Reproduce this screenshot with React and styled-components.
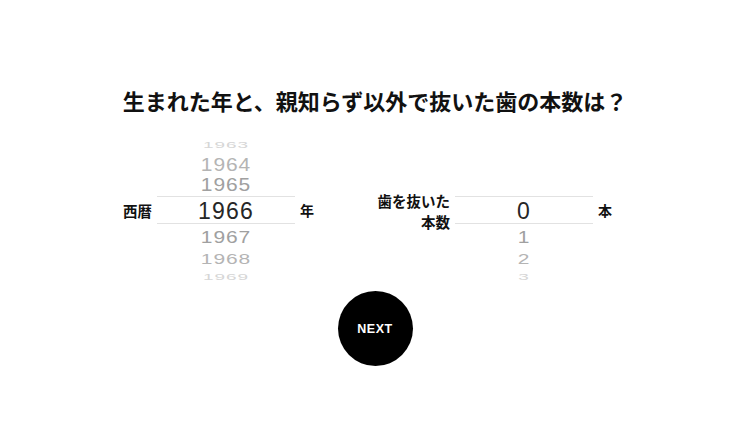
import React from "react";
import styled, { createGlobalStyle } from "styled-components";

const GlobalStyle = createGlobalStyle`
  html, body {
    margin: 0;
    padding: 0;
    background: #fff;
  }
  * {
    box-sizing: border-box;
  }
`;

const JP = `"Noto Sans CJK JP", "Noto Sans", sans-serif`;
const NUM = `"Liberation Sans", Arial, sans-serif`;

// 휠 모양 (위에서 아래로)
const WHEEL = [
  { h: 22, size: 19, sy: 0.45, tone: "#d6d6d6" },
  { h: 17, size: 21, sy: 0.87, tone: "#b4b4b4" },
  { h: 23, size: 21, sy: 0.87, tone: "#a0a0a0" },
  { h: 28, size: 23, sy: 1, tone: "#262626", selected: true },
  { h: 26, size: 21, sy: 0.8, tone: "#a0a0a0" },
  { h: 17, size: 21, sy: 0.67, tone: "#b4b4b4" },
  { h: 20, size: 19, sy: 0.5, tone: "#d6d6d6" },
];

// ----- Page -----
const Page = styled.div`
  min-height: 100vh;
  padding-top: 85px;
  background: #fff;
`;

const Title = styled.h1`
  margin: 0;
  font-family: ${JP};
  font-size: 22px;
  font-weight: 700;
  line-height: 30px;
  color: #111;
  text-align: center;
`;

// 피커 영역
const PickerRow = styled.div`
  display: flex;
  justify-content: center;
  gap: 50px;
  margin-top: 19px;
  padding-right: 60px;
`;

const Group = styled.div`
  display: grid;
  grid-template-columns: 80px 138px 20px;
  column-gap: 5px;
  align-items: center;
`;

const Label = styled.div`
  font-family: ${JP};
  font-size: 14.5px;
  font-weight: 700;
  line-height: 21px;
  color: #111;
  text-align: right;
`;

const Unit = styled.div`
  font-family: ${JP};
  font-size: 14px;
  font-weight: 700;
  line-height: 21px;
  color: #111;
`;

const Wheel = styled.div`
  display: flex;
  flex-direction: column;
`;

const Item = styled.div`
  height: ${({ $h }) => $h}px;
  line-height: ${({ $h }) => $h}px;
  text-align: center;
  white-space: nowrap;
  font-family: ${NUM};
  font-size: ${({ $size }) => $size}px;
  letter-spacing: ${({ $selected }) => ($selected ? 1.2 : 0.9)}px;
  color: ${({ $tone }) => $tone};
  border-top: ${({ $selected }) => ($selected ? "1px solid #e2e2e2" : "0")};
  border-bottom: ${({ $selected }) => ($selected ? "1px solid #e2e2e2" : "0")};

  span {
    display: inline-block;
    transform: scaleY(${({ $sy }) => $sy});
  }
`;

const NextButton = styled.button`
  display: block;
  width: 75px;
  height: 75px;
  margin: 4px auto 0;
  border: 0;
  border-radius: 50%;
  background: #000;
  color: #fff;
  font-family: ${NUM};
  font-size: 12.5px;
  font-weight: 700;
  letter-spacing: 0.5px;
  cursor: pointer;
`;

const Picker = ({ values }) => (
  <Wheel>
    {WHEEL.map((w, i) => (
      <Item
        key={i}
        $h={w.h}
        $size={w.size}
        $sy={w.sy}
        $tone={w.tone}
        $selected={w.selected}
      >
        <span>{values[i]}</span>
      </Item>
    ))}
  </Wheel>
);

// ----- Component -----
const App = () => {
  const years = ["1963", "1964", "1965", "1966", "1967", "1968", "1969"];
  const teeth = ["", "", "", "0", "1", "2", "3"];

  return (
    <Page>
      <GlobalStyle />
      <Title>生まれた年と、親知らず以外で抜いた歯の本数は？</Title>

      <PickerRow>
        <Group>
          <Label>西暦</Label>
          <Picker values={years} />
          <Unit>年</Unit>
        </Group>
        <Group>
          <Label>
            歯を抜いた
            <br />
            本数
          </Label>
          <Picker values={teeth} />
          <Unit>本</Unit>
        </Group>
      </PickerRow>

      <NextButton>NEXT</NextButton>
    </Page>
  );
};

export default App;
